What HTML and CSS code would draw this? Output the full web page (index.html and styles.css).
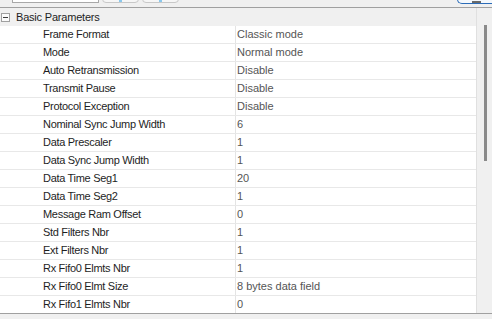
FILE: index.html
```html
<!DOCTYPE html>
<html lang="en">
<head>
    <meta charset="UTF-8">
    <title>Parameter Settings</title>
    <link rel="stylesheet" href="styles.css">
</head>
<body>
    <div class="window">
        <div class="toolbar">
            <div class="search-box"></div>
            <div class="tool-btn"><span class="tool-icon"></span></div>
            <div class="tool-btn"><span class="tool-icon"></span></div>
            <div class="spacer"></div>
            <div class="blue-btn"><span class="blue-icon"></span></div>
        </div>
        <div class="content">
            <div class="grid">
                <div class="group-row">
                    <span class="toggle"></span>
                    <span class="group-title">Basic Parameters</span>
                </div>
                <div class="row"><div class="name">Frame Format</div><div class="value">Classic mode</div></div>
                <div class="row"><div class="name">Mode</div><div class="value">Normal mode</div></div>
                <div class="row"><div class="name">Auto Retransmission</div><div class="value">Disable</div></div>
                <div class="row"><div class="name">Transmit Pause</div><div class="value">Disable</div></div>
                <div class="row"><div class="name">Protocol Exception</div><div class="value">Disable</div></div>
                <div class="row"><div class="name">Nominal Sync Jump Width</div><div class="value">6</div></div>
                <div class="row"><div class="name">Data Prescaler</div><div class="value">1</div></div>
                <div class="row"><div class="name">Data Sync Jump Width</div><div class="value">1</div></div>
                <div class="row"><div class="name">Data Time Seg1</div><div class="value">20</div></div>
                <div class="row"><div class="name">Data Time Seg2</div><div class="value">1</div></div>
                <div class="row"><div class="name">Message Ram Offset</div><div class="value">0</div></div>
                <div class="row"><div class="name">Std Filters Nbr</div><div class="value">1</div></div>
                <div class="row"><div class="name">Ext Filters Nbr</div><div class="value">1</div></div>
                <div class="row"><div class="name">Rx Fifo0 Elmts Nbr</div><div class="value">1</div></div>
                <div class="row"><div class="name">Rx Fifo0 Elmt Size</div><div class="value">8 bytes data field</div></div>
                <div class="row"><div class="name">Rx Fifo1 Elmts Nbr</div><div class="value">0</div></div>
            </div>
            <div class="scrollbar">
                <div class="thumb"></div>
            </div>
        </div>
    </div>
</body>
</html>
```
FILE: styles.css
```css
body {
    margin: 0;
    padding: 0;
    background-color: #f0f0f0;
    font-family: "Liberation Sans", Arial, sans-serif;
    font-size: 11px;
    overflow: hidden;
}

.window {
    width: 492px;
    height: 319px;
    display: flex;
    flex-direction: column;
}

.toolbar {
    height: 7px;
    display: flex;
    align-items: flex-end;
    border-bottom: 1px solid #a0a0a0;
    overflow: hidden;
}
.search-box {
    width: 85px;
    height: 10px;
    margin-left: 12px;
    margin-bottom: 4px;
    border: 1px solid #a8a8a8;
    background-color: #ffffff;
}
.tool-btn {
    width: 35px;
    height: 10px;
    margin-left: 3px;
    margin-bottom: 4px;
    border: 1px solid #c8c8c8;
    border-radius: 0 0 4px 4px;
    background-color: #f6f6f6;
    position: relative;
}
.tool-icon {
    position: absolute;
    left: 16px;
    bottom: 0;
    width: 3px;
    height: 2px;
    background-color: #8cc8ec;
}
.spacer {
    flex: 1;
}
.blue-btn {
    width: 34px;
    height: 10px;
    margin-bottom: 3px;
    border: 1px solid #2b6cb8;
    border-right: none;
    border-radius: 0 0 0 5px;
    background-color: #f4f8fc;
    position: relative;
}
.blue-icon {
    position: absolute;
    left: 14px;
    bottom: 0;
    width: 9px;
    height: 2px;
    background-color: #6a6a6a;
}

.content {
    flex: 1;
    display: flex;
    overflow: hidden;
    border-bottom: 1px solid #a0a0a0;
    margin-bottom: 5px;
}
.grid {
    width: 476px;
    overflow: hidden;
}
.group-row {
    height: 18px;
    display: flex;
    align-items: center;
    color: #1e1e1e;
    letter-spacing: -0.2px;
}
.toggle {
    width: 7px;
    height: 7px;
    margin-left: 1px;
    margin-right: 6px;
    border: 1px solid #a0a0a0;
    background-color: #fbfbfb;
    position: relative;
}
.toggle::after {
    content: "";
    position: absolute;
    left: 1px;
    top: 3px;
    width: 5px;
    height: 1px;
    background-color: #3c3c3c;
}
.row {
    height: 17px;
    display: flex;
    background-color: #ffffff;
    border-bottom: 1px solid #e8e8e8;
}
.name {
    width: 192px;
    padding-left: 43px;
    line-height: 17px;
    color: #1e1e1e;
    letter-spacing: -0.3px;
    border-right: 1px solid #e4e4e4;
    white-space: nowrap;
}
.value {
    flex: 1;
    padding-left: 1px;
    line-height: 17px;
    color: #555555;
    white-space: nowrap;
}

.scrollbar {
    flex: 1;
    border-left: 1px solid #e0e0e0;
    position: relative;
}
.thumb {
    position: absolute;
    left: 7px;
    top: 17px;
    width: 3px;
    height: 136px;
    background-color: #8a8a8a;
}
```
